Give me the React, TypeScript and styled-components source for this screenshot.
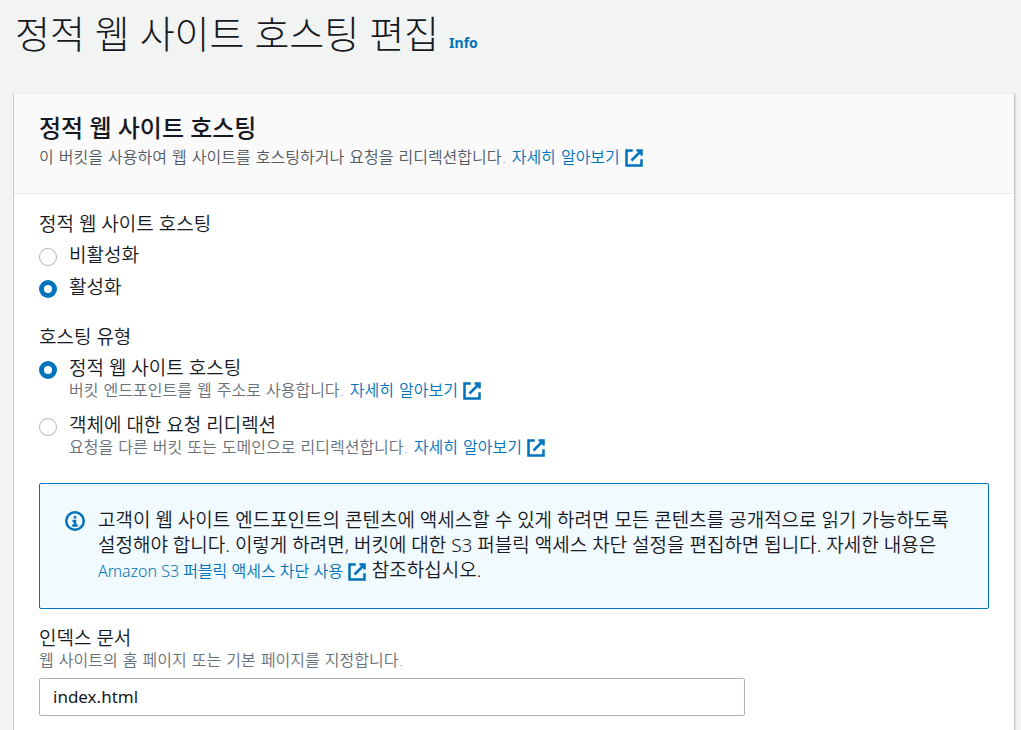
import React, { useState } from "react";
import styled, { createGlobalStyle } from "styled-components";

const GlobalStyle = createGlobalStyle`
  *, *::before, *::after { box-sizing: border-box; }
  body {
    margin: 0;
    background: #f2f3f3;
    color: #16191f;
    font-family: "Noto Sans", "Noto Sans CJK KR", sans-serif;
    font-size: 19px;
    font-weight: 350;
    line-height: 25px;
    word-break: keep-all;
  }
`;

const Page = styled.main`
  display: flex;
  flex-direction: column;
  min-height: 100vh;
  padding: 0 6px 0 13px;
`;

const PageHeader = styled.header`
  display: flex;
  align-items: baseline;
  gap: 10px;
  padding: 7px 2px 34px;
`;

const PageTitle = styled.h1`
  margin: 0;
  font-size: 38px;
  line-height: 52px;
  font-weight: 300;
`;

const InfoLink = styled.a`
  color: #0073bb;
  font-size: 14px;
  font-weight: 700;
  line-height: 20px;
  text-decoration: none;
`;

const Card = styled.section`
  flex: 1;
  background: #fff;
  border: 1px solid #c6cccc;
  border-top-color: #eaeded;
  border-bottom: 0;
  box-shadow: 1px 1px 1px rgba(0, 28, 36, 0.1);
`;

const CardHeader = styled.header`
  display: flex;
  flex-direction: column;
  gap: 4px;
  padding: 18px 25px 25px;
  background: #fafafa;
  border-bottom: 1px solid #eaeded;
`;

const CardTitle = styled.h2`
  margin: 0;
  font-size: 24px;
  line-height: 32px;
  font-weight: 500;
`;

const Description = styled.p<{ $strong?: boolean }>`
  margin: 0;
  color: ${(p) => (p.$strong ? "#545b64" : "#687078")};
  font-family: "DejaVu Sans", "Noto Sans CJK KR", sans-serif;
  font-size: 16px;
  line-height: 20px;
`;

const TextLink = styled.a`
  color: #0073bb;
  font-size: 16px;
  text-decoration: none;
  white-space: nowrap;
`;

const LinkIcon = styled.svg`
  width: 20px;
  height: 20px;
  margin: -3px 0 -1px 4px;
  vertical-align: middle;
  fill: none;
  stroke: currentColor;
  stroke-width: 2;
`;

const CardBody = styled.div`
  display: flex;
  flex-direction: column;
  gap: 25px;
  padding: 18px 25px 14px;
`;

const Group = styled.fieldset`
  min-width: 0;
  margin: 0;
  padding: 0;
  border: 0;
`;

const Legend = styled.legend`
  padding: 0;
  margin-bottom: 6px;
`;

const Options = styled.div<{ $gap: number }>`
  display: flex;
  flex-direction: column;
  gap: ${(p) => p.$gap}px;
`;

const Option = styled.div`
  display: grid;
  grid-template-columns: 18px 1fr;
  column-gap: 12px;
`;

const OptionText = styled.div`
  display: flex;
  flex-direction: column;
  align-items: flex-start;
`;

const Radio = styled.input`
  appearance: none;
  width: 18px;
  height: 18px;
  margin: 5px 0 0;
  border: 1px solid #aab7b8;
  border-radius: 50%;
  background: #fff;
  &:checked {
    border: 5px solid #0073bb;
  }
`;

const Alert = styled.div`
  display: flex;
  gap: 13px;
  padding: 24px 25px;
  border: 1px solid #0073bb;
  border-radius: 2px;
  background: #f1faff;
`;

const InfoIcon = styled.svg`
  flex: none;
  width: 20px;
  height: 20px;
  margin-top: 3px;
  fill: none;
  stroke: #0073bb;
  stroke-width: 2;
`;

const AlertText = styled.p`
  margin: 0;
`;

const Field = styled.div`
  display: grid;
  grid-template-columns: repeat(4, 1fr);
  column-gap: 25px;
  margin-top: -8px;
`;

const FieldContent = styled.div`
  grid-column: span 3;
`;

const Label = styled.label`
  display: block;
`;

const TextInput = styled.input`
  display: block;
  width: 100%;
  height: 38px;
  margin-top: 7px;
  padding: 0 13px 2px;
  border: 1px solid #aab7b8;
  border-radius: 2px;
  background: #fff;
  color: #16191f;
  font-family: inherit;
  font-size: 17px;
  font-weight: 400;
`;

function ExternalLink({ children }: { children: React.ReactNode }) {
  return (
    <TextLink href="#">
      {children}
      <LinkIcon viewBox="0 0 16 16" aria-hidden="true">
        <path d="M10 2h4v4M6 10l8-8M14 9.05V14H2V2h5" />
      </LinkIcon>
    </TextLink>
  );
}

interface RadioOptionProps {
  id: string;
  name: string;
  label: string;
  checked: boolean;
  onSelect: () => void;
  children?: React.ReactNode;
}

function RadioOption({ id, name, label, checked, onSelect, children }: RadioOptionProps) {
  return (
    <Option>
      <Radio type="radio" id={id} name={name} checked={checked} onChange={onSelect} />
      <OptionText>
        <Label htmlFor={id}>{label}</Label>
        {children && <Description>{children}</Description>}
      </OptionText>
    </Option>
  );
}

export default function App() {
  const [enabled, setEnabled] = useState(true);
  const [type, setType] = useState("host");
  const [indexDocument, setIndexDocument] = useState("index.html");

  return (
    <>
      <GlobalStyle />
      <Page>
        <PageHeader>
          <PageTitle>정적 웹 사이트 호스팅 편집</PageTitle>
          <InfoLink href="#">Info</InfoLink>
        </PageHeader>
        <Card>
          <CardHeader>
            <CardTitle>정적 웹 사이트 호스팅</CardTitle>
            <Description $strong>
              이 버킷을 사용하여 웹 사이트를 호스팅하거나 요청을 리디렉션합니다.{" "}
              <ExternalLink>자세히 알아보기</ExternalLink>
            </Description>
          </CardHeader>
          <CardBody>
            <Group>
              <Legend>정적 웹 사이트 호스팅</Legend>
              <Options $gap={7}>
                <RadioOption
                  id="disable"
                  name="hosting"
                  label="비활성화"
                  checked={!enabled}
                  onSelect={() => setEnabled(false)}
                />
                <RadioOption
                  id="enable"
                  name="hosting"
                  label="활성화"
                  checked={enabled}
                  onSelect={() => setEnabled(true)}
                />
              </Options>
            </Group>
            <Group>
              <Legend>호스팅 유형</Legend>
              <Options $gap={12}>
                <RadioOption
                  id="host"
                  name="type"
                  label="정적 웹 사이트 호스팅"
                  checked={type === "host"}
                  onSelect={() => setType("host")}
                >
                  버킷 엔드포인트를 웹 주소로 사용합니다.{" "}
                  <ExternalLink>자세히 알아보기</ExternalLink>
                </RadioOption>
                <RadioOption
                  id="redirect"
                  name="type"
                  label="객체에 대한 요청 리디렉션"
                  checked={type === "redirect"}
                  onSelect={() => setType("redirect")}
                >
                  요청을 다른 버킷 또는 도메인으로 리디렉션합니다.{" "}
                  <ExternalLink>자세히 알아보기</ExternalLink>
                </RadioOption>
              </Options>
            </Group>
            <Alert>
              <InfoIcon viewBox="0 0 16 16" aria-hidden="true">
                <circle cx="8" cy="8" r="7" />
                <path d="M8 11.5V8H6M5.8 11.5h4.4M7 5h2" />
              </InfoIcon>
              <AlertText>
                고객이 웹 사이트 엔드포인트의 콘텐츠에 액세스할 수 있게 하려면 모든 콘텐츠를
                공개적으로 읽기 가능하도록 설정해야 합니다. 이렇게 하려면, 버킷에 대한 S3 퍼블릭
                액세스 차단 설정을 편집하면 됩니다. 자세한 내용은{" "}
                <ExternalLink>Amazon S3 퍼블릭 액세스 차단 사용</ExternalLink> 참조하십시오.
              </AlertText>
            </Alert>
            <Field>
              <FieldContent>
                <Label htmlFor="index-document">인덱스 문서</Label>
                <Description id="index-hint">
                  웹 사이트의 홈 페이지 또는 기본 페이지를 지정합니다.
                </Description>
                <TextInput
                  type="text"
                  id="index-document"
                  aria-describedby="index-hint"
                  value={indexDocument}
                  onChange={(e) => setIndexDocument(e.target.value)}
                />
              </FieldContent>
            </Field>
          </CardBody>
        </Card>
      </Page>
    </>
  );
}
